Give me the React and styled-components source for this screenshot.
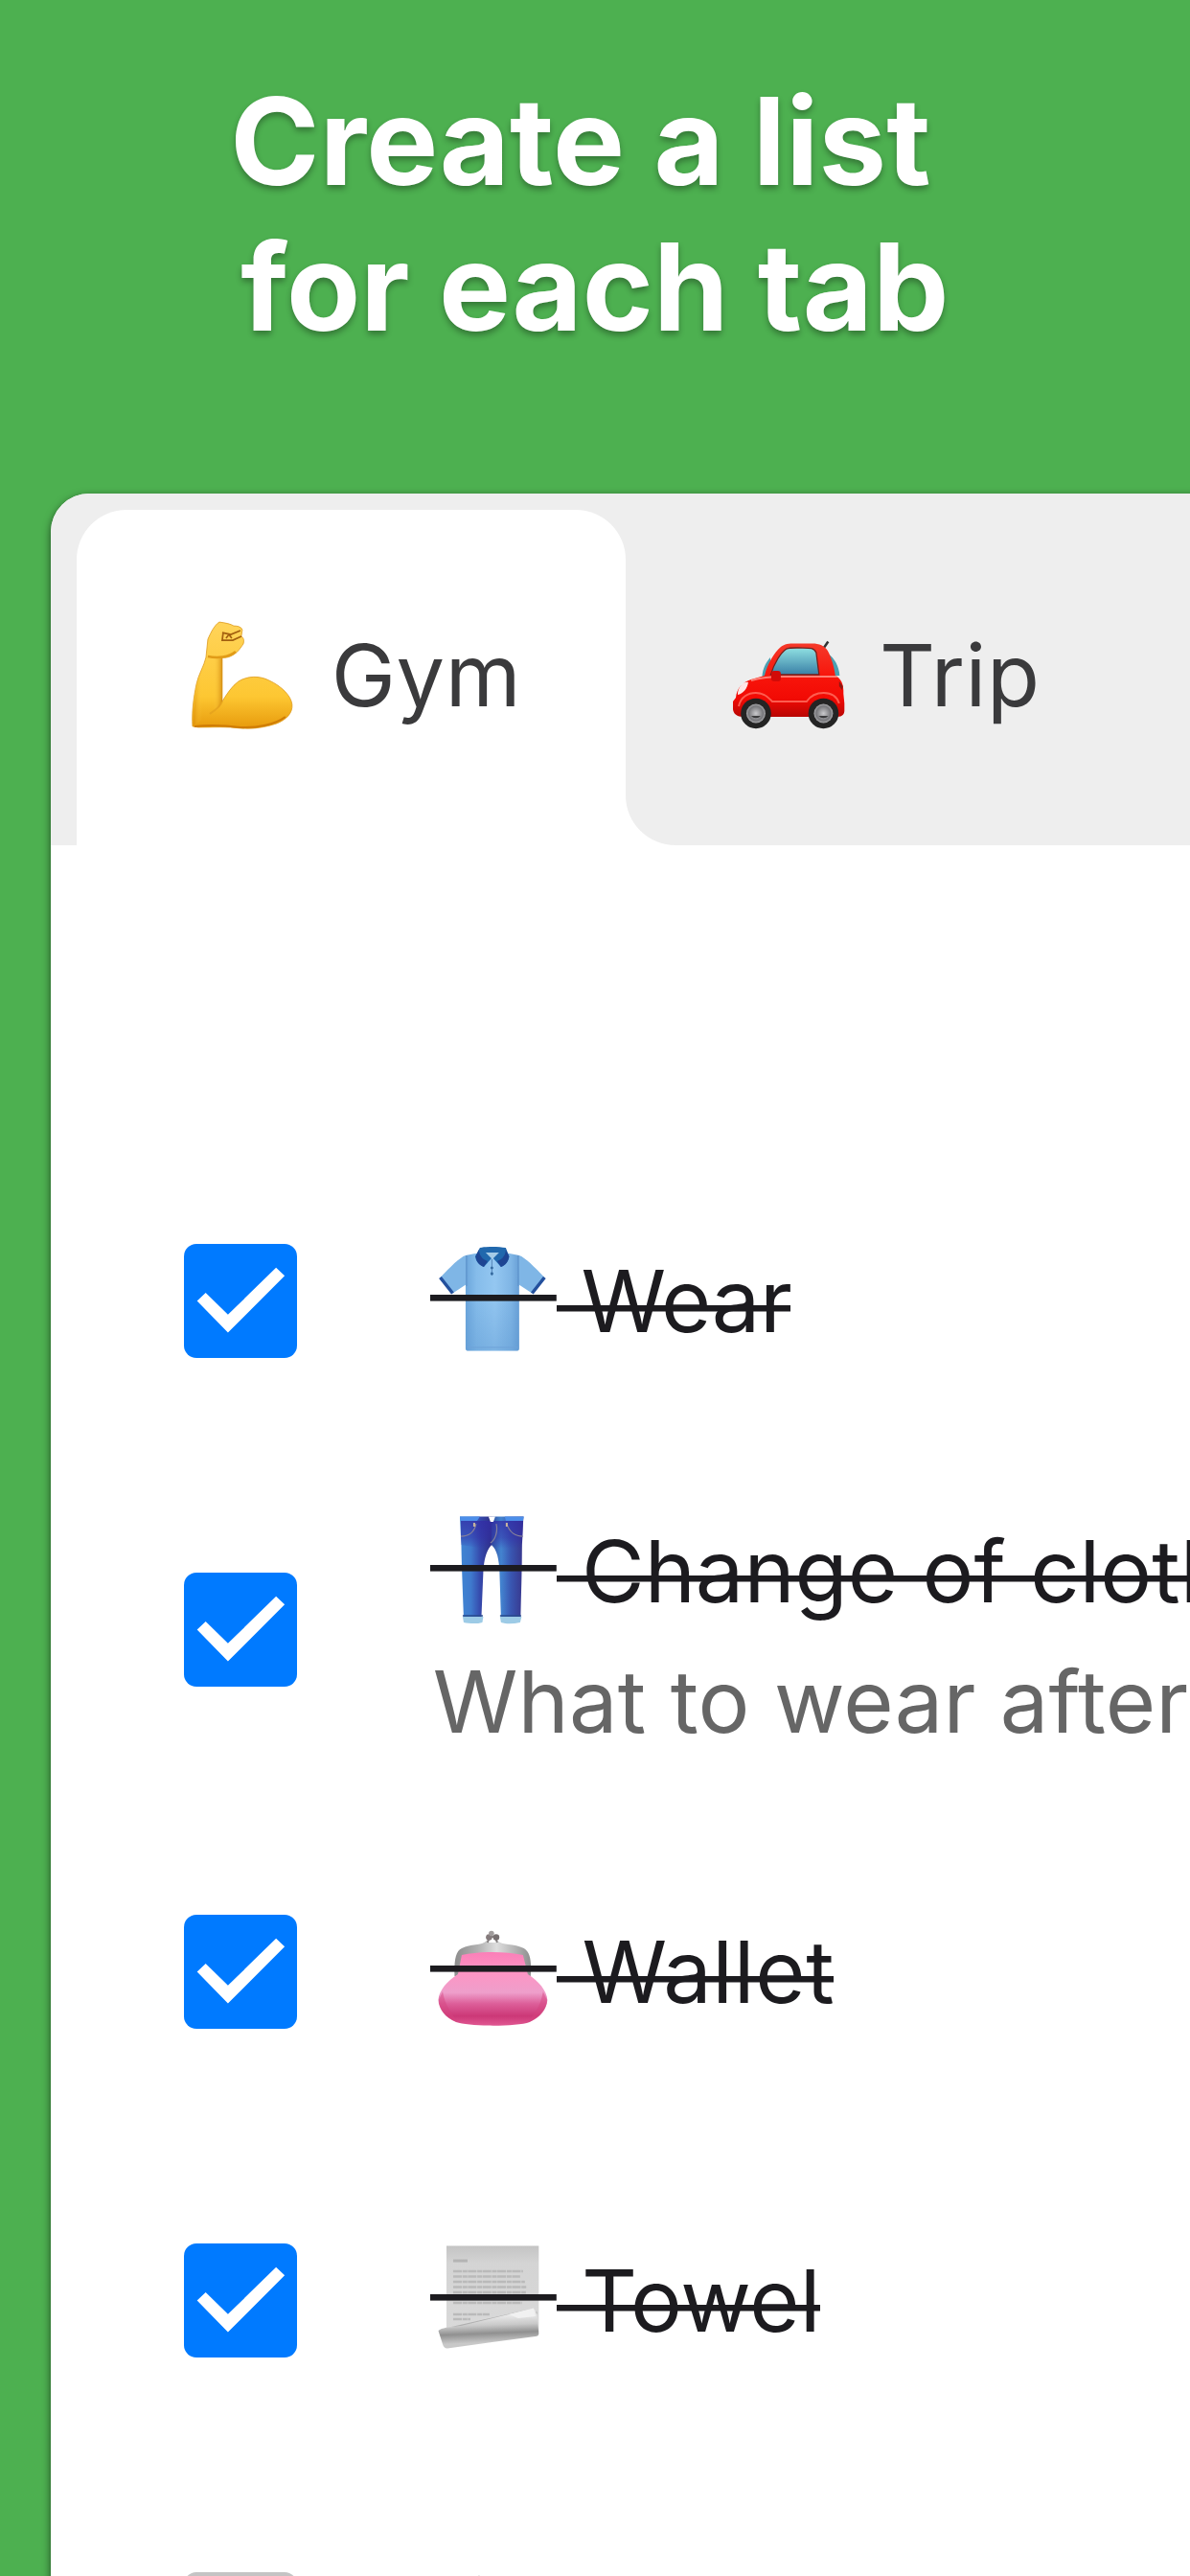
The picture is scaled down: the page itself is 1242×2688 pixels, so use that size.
import React from 'react'
import styled, { createGlobalStyle } from 'styled-components'

const GlobalStyle = createGlobalStyle`
  * {
    box-sizing: border-box;
  }

  body {
    margin: 0;
    background: #4db050;
    font-family: Inter, 'Liberation Sans', sans-serif;
    overflow: hidden;
  }
`

const Page = styled.div`
  display: flex;
  flex-direction: column;
  height: 2688px;
  overflow: hidden;
  background: #4db050;
`

const Heading = styled.h1`
  flex: none;
  height: 514.7px;
  margin: 0;
  padding-top: 71px;
  color: #fff;
  font-size: 126px;
  font-weight: 700;
  line-height: 152px;
  letter-spacing: 0.2px;
  text-align: center;
  white-space: pre;
  text-shadow: 0 4px 6px rgba(0, 0, 0, 0.32);
`

const Card = styled.main`
  flex: 1;
  margin: 0 -80px -40px 53px;
  overflow: hidden;
  background: #fff;
  border-radius: 40px 0 0 0;
  box-shadow: 0 3px 9px rgba(0, 0, 0, 0.6);
`

const TabBar = styled.nav`
  display: flex;
  height: 367.3px;
  padding: 17.6px 0 0 26.6px;
  background: #eee;
`

// White backing so that the inactive tab can curve away from the active one
const TabSlot = styled.div`
  flex: ${({ $grow }) => ($grow ? '1' : 'none')};
  display: flex;
  background: ${({ $grow }) => ($grow ? 'linear-gradient(90deg, #fff 60px, #eee 60px)' : 'none')};
`

const Tab = styled.div`
  display: flex;
  align-items: flex-start;
  width: ${({ $active }) => ($active ? '573.8px' : '100%')};
  padding: 107.7px 0 0 105px;
  background: ${({ $active }) => ($active ? '#fff' : '#eee')};
  border-radius: ${({ $active }) => ($active ? '52px 52px 0 0' : '0 0 0 52px')};
`

const TabLabel = styled.span`
  margin-top: -1px;
  padding-left: ${({ $active }) => ($active ? '3.5px' : '2px')};
  color: #3a3a3c;
  font-size: 90px;
  line-height: 132px;
  letter-spacing: 0.6px;
  white-space: pre;
`

const List = styled.ul`
  margin: 0;
  padding: 304px 0 0;
  list-style: none;
`

const Row = styled.li`
  display: flex;
  align-items: center;
  height: ${({ $tall }) => ($tall ? '357px' : '343px')};
  padding-left: 138.6px;
`

const Checkbox = styled.span`
  flex: none;
  align-self: flex-start;
  width: 118.8px;
  height: 118.8px;
  margin: 112px 138.4px 0 0;
  background: ${({ $checked }) => ($checked ? '#007aff' : '#c4c4c4')};
  border-radius: 13px;

  svg {
    display: block;
  }
`

const Title = styled.div`
  display: flex;
  align-items: flex-start;
  height: 132px;
  color: #1c1b1f;
  font-size: 90px;
  line-height: 132px;
  white-space: pre;
`

const Struck = styled.span`
  margin-top: 1px;
  padding-left: 1px;
  letter-spacing: ${({ $tracking }) => $tracking}px;
  background: linear-gradient(#1c1b1f, #1c1b1f) 0 69.5px / calc(100% - 1px) 6.5px no-repeat;
`

const Subtitle = styled.div`
  margin: 4.4px 0 0 3px;
  color: #666;
  font-size: 90px;
  line-height: 132px;
  letter-spacing: 0.15px;
  white-space: pre;
`

const EmojiSvg = styled.svg`
  flex: none;
  display: block;
  width: 131.8px;
  height: 132px;
  margin-top: ${({ $struck }) => ($struck ? '-1.5px' : '0')};
`

const Emoji = ({ struck, children }) => (
  <EmojiSvg viewBox="0 0 132 132" $struck={struck}>
    {children}
    {struck && <rect x="0" y="61" width="132" height="6.6" fill="#1c1b1f" />}
  </EmojiSvg>
)

const Arm = () => (
  <Emoji>
    <defs>
      <linearGradient id="skin" x1="0" y1="0" x2="0" y2="1">
        <stop offset="0" stopColor="#ffd45a" />
        <stop offset="0.7" stopColor="#fdc732" />
        <stop offset="1" stopColor="#e79a0c" />
      </linearGradient>
      <linearGradient id="skinSide" x1="0" y1="0" x2="1" y2="0">
        <stop offset="0" stopColor="#d98a08" stopOpacity="0.6" />
        <stop offset="0.3" stopColor="#ffcf45" stopOpacity="0" />
        <stop offset="0.7" stopColor="#ffcf45" stopOpacity="0" />
        <stop offset="1" stopColor="#c97a04" stopOpacity="0.7" />
      </linearGradient>
    </defs>
    <path
      d="M16 118 C15 104 17 88 20 74 C22 64 28 55 30 46 L32 27 C35 20 39 12 44 9 C51 10 56 11 59 13 C63 13 67 14 68 17 L67 24 C70 26 70 29 69 32 C66 36 64 40 59 43 C56 45 51 47 47 46 L47 92 C52 84 57 76 64 71 C74 65 86 65 96 70 C109 76 119 86 120 95 C121 104 114 111 104 115 C92 119 80 121 66 120 C52 118 38 119 22 119 Z"
      fill="url(#skin)"
      stroke="#dd9a20"
      strokeWidth="0.8"
    />
    <path d="M17 117 C17 95 19 78 24 65 L32 46 H47 V92 L44 98 L34 106 Z" fill="url(#skinSide)" />
    <path d="M47 92 C44 98 41 100 34 105" fill="none" stroke="#e2a01c" strokeWidth="2" opacity="0.7" />
    <path d="M18 118 C38 116 50 117 66 119 C84 120 102 116 113 108" fill="none" stroke="#cf7c05" strokeWidth="2" />
    <path d="M32 45 C42 47 54 46 61 40" fill="none" stroke="#e19b17" strokeWidth="2.5" />
    <path d="M47 20 L56 22 L66 18 M48 20 L47 28 L58 28 L67 24 M51 26 L54 22 L57 26" fill="none" stroke="#a3600f" strokeWidth="1.7" />
  </Emoji>
)

const Car = () => (
  <Emoji>
    <defs>
      <linearGradient id="carBody" x1="0" y1="0" x2="0" y2="1">
        <stop offset="0" stopColor="#f5392a" />
        <stop offset="0.45" stopColor="#f8150b" />
        <stop offset="0.75" stopColor="#f20a04" />
        <stop offset="1" stopColor="#b80604" />
      </linearGradient>
      <linearGradient id="carGlass" x1="0" y1="0" x2="0" y2="1">
        <stop offset="0" stopColor="#8fe0e2" />
        <stop offset="1" stopColor="#3a80a6" />
      </linearGradient>
      <radialGradient id="hub">
        <stop offset="0" stopColor="#c9c9cc" />
        <stop offset="0.75" stopColor="#77777b" />
        <stop offset="1" stopColor="#a9a9ac" />
      </radialGradient>
    </defs>
    <path d="M102 36 L106.5 29.5" stroke="#333" strokeWidth="2.5" />
    <path d="M106 42 C113 46 118 56 118.5 65 H110 Z" fill="#4ba0b2" />
    <path d="M46 46 C41 52 38 58 37.5 66 H48 Z" fill="#4ba0b2" />
    <path
      d="M40 65 C43 53 50 41 57 35 C61 32 65 31.5 72 31.5 H90 C97 31.5 103 34 106 39 C110 46 113 57 114 65 C120 68 123 74 122.5 84 L123.5 94 V102 C123 107 120 108 114 108 H18 C11 108 7.5 105 7 100 V92 L10 88 C11 78 17 72 26 69 Z"
      fill="url(#carBody)"
    />
    <path
      d="M46.5 64 C50 52 57 41 63 37 C66 35.5 72 36 80 36 C88 36 92 36 94 41 L97 64 Z"
      fill="url(#carGlass)"
      stroke="#74201b"
      strokeWidth="1.3"
    />
    <path d="M26 70 C36 67 48 66 60 66 H116" fill="none" stroke="#ff9a90" strokeWidth="2" opacity="0.8" />
    <path d="M12 83 C13 76 18 71 23 72 C22 79 17 84 12 85 Z" fill="#fff" opacity="0.9" />
    <path d="M118 71 L122 76 L121 80 L118 76 Z" fill="#8e1712" />
    <path
      d="M13 97 C15 87 23 83 31 83 C41 83 45 89 48 92 H84 C88 86 94 83 102 83 C111 83 116 88 118 94"
      fill="none"
      stroke="#ff6b5d"
      strokeWidth="2"
      opacity="0.85"
    />
    <rect x="47" y="60" width="10" height="11" rx="3" fill="#d20b08" />
    {[31, 101.6].map((cx) => (
      <g key={cx}>
        <circle cx={cx} cy="104.5" r="15.8" fill="#242424" />
        <circle cx={cx} cy="104.5" r="10" fill="url(#hub)" />
        <path d={`M${cx - 5} 107 A6 5 0 0 0 ${cx + 5} 107 Z`} fill="#3b3b3d" />
      </g>
    ))}
  </Emoji>
)

const Shirt = () => (
  <Emoji struck>
    <defs>
      <linearGradient id="shirtBody" x1="0" y1="0" x2="1" y2="0">
        <stop offset="0" stopColor="#6ba5db" />
        <stop offset="0.2" stopColor="#85bcea" />
        <stop offset="0.55" stopColor="#94c7f1" />
        <stop offset="0.85" stopColor="#7fb5e5" />
        <stop offset="1" stopColor="#689fd6" />
      </linearGradient>
      <linearGradient id="shirtShade" x1="0" y1="0" x2="0" y2="1">
        <stop offset="0.4" stopColor="#5b96d0" stopOpacity="0" />
        <stop offset="1" stopColor="#5b96d0" stopOpacity="0.4" />
      </linearGradient>
    </defs>
    <path d="M37 20 C31 22 21 32 10.5 43 L23.5 59.5 L38 50 Z" fill="#7fb6e6" />
    <path d="M93 20 C99 22 109 32 119.5 43 L106.5 59.5 L92 50 Z" fill="#7fb6e6" />
    <path d="M47 18 L37 20 V117 C37 119 38 119.5 40 119.5 H90 C92 119.5 93 119 93 117 V20 L83 18 Z" fill="url(#shirtBody)" />
    <path d="M47 18 L37 20 V117 C37 119 38 119.5 40 119.5 H90 C92 119.5 93 119 93 117 V20 L83 18 Z" fill="url(#shirtShade)" />
    <path d="M10.5 43 L23.5 59.5 M119.5 43 L106.5 59.5" stroke="#23509d" strokeWidth="3.5" />
    <path d="M38 20 V52 M92 20 V52" stroke="#5e94cc" strokeWidth="1.2" />
    <path d="M38 116 H92" stroke="#6da2d8" strokeWidth="1" />
    <path d="M52 12 C58 10.5 72 10.5 79 12 L82.5 21 C82 27 77 31 74 32 L65 22 L56 32 C50 29 48 26 47 21 Z" fill="#2168ad" />
    <path
      d="M51 14 L47.5 21 C48.5 27 51 30 56 32 L60 26 C54 24 51 19 51 14 Z M79 14 L82.5 21 C81.5 27 79 30 74 32 L70 26 C76 24 79 19 79 14 Z"
      fill="#1e4593"
    />
    <path d="M58 17 H72 L65 24 Z" fill="#a5cbe6" />
    <path d="M64.5 24 V41" stroke="#5586b8" strokeWidth="1" />
    <circle cx="64.5" cy="33" r="1.5" fill="#356a9f" />
    <circle cx="64.5" cy="39" r="1.5" fill="#356a9f" />
  </Emoji>
)

const Jeans = () => (
  <Emoji struck>
    <defs>
      <linearGradient id="denimL" x1="0" y1="0" x2="1" y2="0">
        <stop offset="0" stopColor="#3f85d2" />
        <stop offset="0.35" stopColor="#3f79cd" />
        <stop offset="0.65" stopColor="#3548ab" />
        <stop offset="1" stopColor="#2e2f86" />
      </linearGradient>
      <linearGradient id="denimR" x1="0" y1="0" x2="1" y2="0">
        <stop offset="0" stopColor="#2e4c9c" />
        <stop offset="0.3" stopColor="#4384d0" />
        <stop offset="0.6" stopColor="#3957b2" />
        <stop offset="1" stopColor="#38358b" />
      </linearGradient>
      <linearGradient id="denimTop" x1="0" y1="0" x2="0" y2="1">
        <stop offset="0" stopColor="#322ba5" stopOpacity="0.75" />
        <stop offset="0.6" stopColor="#322ba5" stopOpacity="0.5" />
        <stop offset="1" stopColor="#322ba5" stopOpacity="0" />
      </linearGradient>
    </defs>
    <path d="M31 10.5 H64.3 V40 C58 46 56 58 55.5 68 L53.5 116 H35 C34 88 33 66 32.5 40 Z" fill="url(#denimL)" />
    <path d="M64 10.5 H97.5 L96 40 C96 66 95 92 94.5 116 H74 L72.5 68 C72 56 70 45 64 40 Z" fill="url(#denimR)" />
    <path d="M32 15 H97 L96 44 L72 44 L64 40 L56 44 L32 40 Z" fill="url(#denimTop)" />
    <path d="M31 10.5 H52 L49 15 H32 Z M78 10.5 H98 L97 15 H79 Z" fill="#4c8ee9" />
    <path d="M61 10.5 H68 L66 16 H63 Z" fill="#fff" />
    <path
      d="M32 31 C40 31 46 27 48 18 M97 31 C88 31 83 27 80 18 M69 18 C71 26 68 35 63 38"
      fill="none"
      stroke="#85809a"
      strokeWidth="1.2"
    />
    <path d="M46 17 V21 M80 17 V21" stroke="#c9b79e" strokeWidth="2" />
    <path d="M34 115 H55.5 L54.5 121 C48 123 40 122 35 121 Z M73 115 H95.5 L94 121 C87 122.5 80 123 74 121 Z" fill="#9dcbe6" />
    <path d="M34 114 H55 M73 114 H95" stroke="#294b8d" strokeWidth="1.5" />
  </Emoji>
)

const Purse = () => (
  <Emoji struck>
    <defs>
      <linearGradient id="purseBody" x1="0" y1="0" x2="0" y2="1">
        <stop offset="0" stopColor="#fb7fb8" />
        <stop offset="0.28" stopColor="#fd95c4" />
        <stop offset="0.55" stopColor="#ee9fcb" />
        <stop offset="0.7" stopColor="#dd5f9a" />
        <stop offset="0.87" stopColor="#cc3877" />
        <stop offset="1" stopColor="#e05792" />
      </linearGradient>
      <linearGradient id="purseFrame" x1="0" y1="0" x2="1" y2="0">
        <stop offset="0" stopColor="#8c8c8c" />
        <stop offset="0.3" stopColor="#b0b0b0" />
        <stop offset="0.55" stopColor="#dedede" />
        <stop offset="1" stopColor="#8e8e8e" />
      </linearGradient>
    </defs>
    <path d="M25.5 72 C25 58 26 46 33 43 C42 38 54 41 59 35 H70 C75 40 88 38 98 43 C105 47 106 58 105 72 Z" fill="url(#purseFrame)" />
    <path
      d="M33 50 C52 46 78 46 97 50 L102 70 C113 77 122 87 122.5 97 C122 107 114 115 104 120 C90 125 42 125 27 120 C16 115 9 107 8.5 97 C9 87 18 77 29 70 Z"
      fill="url(#purseBody)"
    />
    <path
      d="M9 97 C10 110 18 117 29 120 C23 111 16 105 13 88 Z M122 97 C121 110 113 117 102 120 C109 111 115 105 118 88 Z"
      fill="#d4427f"
      opacity="0.45"
    />
    <path d="M60 37 L62 31 H68 L70 37" fill="#fff" stroke="#858080" strokeWidth="2" />
    <circle cx="61.5" cy="31.5" r="3.3" fill="#857b7c" />
    <circle cx="69" cy="31.5" r="3.3" fill="#776f70" />
    <circle cx="64" cy="27.5" r="2.8" fill="#a09b9b" />
  </Emoji>
)

const Scroll = () => (
  <Emoji struck>
    <defs>
      <linearGradient id="paper" x1="0" y1="0" x2="0" y2="1">
        <stop offset="0" stopColor="#c4c4c4" />
        <stop offset="0.2" stopColor="#d4d4d4" />
        <stop offset="1" stopColor="#d9d9d9" />
      </linearGradient>
      <linearGradient id="curl" x1="0.45" y1="0" x2="0.55" y2="1">
        <stop offset="0.2" stopColor="#e8e8e8" />
        <stop offset="0.42" stopColor="#c9c9c9" />
        <stop offset="0.62" stopColor="#909090" />
        <stop offset="0.85" stopColor="#c8c8c8" />
      </linearGradient>
    </defs>
    <path d="M17 10.5 H113.5 V100 H17 Z" fill="url(#paper)" />
    <path d="M24 26 H39" stroke="#b4b4b4" strokeWidth="3" />
    <path
      d="M24 37 H97 M24 42.5 H94 M24 48 H99 M24 53.5 H101 M24 59 H100 M24 70 H96 M24 82 H62 M24 87 H42"
      stroke="#bababa"
      strokeWidth="2.6"
      strokeDasharray="9 0.8 5 0.6"
    />
    <path d="M22 95 L107 76 L112 80 L108 90 Z" fill="#b0b0b0" />
    <path
      d="M107 76 C111 76 111 83 112 86 L113.5 102 C113.5 104 112 105 110 105 L18 117.5 C15 117.5 14 116 13 113 L8.5 99 C12 96 20 95 28 95 Z"
      fill="url(#curl)"
    />
    <path d="M82 82 L108 75.5 L110 84 L92 86 Z" fill="#f1f1f1" />
  </Emoji>
)

// Only the very tip of this one shows above the fold
const Bottle = () => (
  <Emoji>
    <path d="M46 16 C48 9 54 9 56 16 L64 34 V118 H38 V34 Z" fill="#9b9b9b" />
  </Emoji>
)

const Check = () => (
  <svg viewBox="0 0 119 119" width="118.8" height="118.8">
    <path d="M13.7 59.7 L22.7 51 L46 74 L96.3 24.7 L105.3 33.3 L46 92.7 Z" fill="#fff" />
  </svg>
)

const tabs = [
  { key: 'gym', label: ' Gym', Icon: Arm, active: true },
  { key: 'trip', label: ' Trip', Icon: Car, active: false },
]

const items = [
  { key: 1, title: ' Wear', Icon: Shirt, checked: true, tracking: -0.5 },
  { key: 2, title: ' Change of clothes', subtitle: 'What to wear after', Icon: Jeans, checked: true },
  { key: 3, title: ' Wallet', Icon: Purse, checked: true, tracking: 0.6 },
  { key: 4, title: ' Towel', Icon: Scroll, checked: true },
  { key: 5, Icon: Bottle, checked: false },
]

const ListItem = ({ item: { title, subtitle, Icon, checked, tracking = 0 } }) => (
  <Row $tall={Boolean(subtitle)}>
    <Checkbox $checked={checked}>{checked && <Check />}</Checkbox>
    <div>
      <Title>
        <Icon />
        {title && <Struck $tracking={tracking}>{title}</Struck>}
      </Title>
      {subtitle && <Subtitle>{subtitle}</Subtitle>}
    </div>
  </Row>
)

const App = () => {
  return (
    <>
      <GlobalStyle />
      <Page>
        <Heading>{'Create a list \nfor each tab'}</Heading>
        <Card>
          <TabBar>
            {tabs.map(({ key, label, Icon, active }) => (
              <TabSlot key={key} $grow={!active}>
                <Tab $active={active}>
                  <Icon />
                  <TabLabel $active={active}>{label}</TabLabel>
                </Tab>
              </TabSlot>
            ))}
          </TabBar>
          <List>
            {items.map((item) => (
              <ListItem key={item.key} item={item} />
            ))}
          </List>
        </Card>
      </Page>
    </>
  )
}

export default App
